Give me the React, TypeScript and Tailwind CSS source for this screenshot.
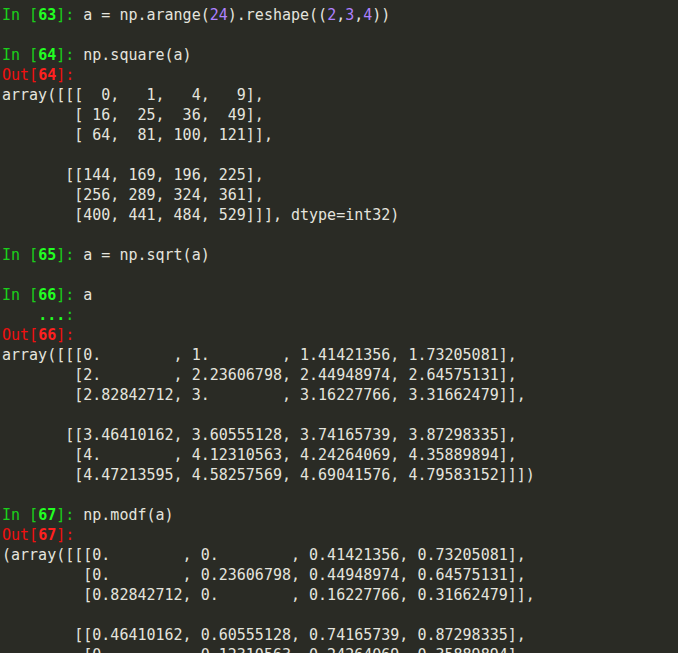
import React from 'react'

type Seg = { t: string; c?: string }

const txt = 'text-[#e4e4de]'
const num = 'text-[#ae81ff]'

function InPrompt({ n }: { n: number }) {
    return (
        <>
            <span className="text-[#1ad01a]">In [</span>
            <span className="text-[#22ff22] font-bold">{n}</span>
            <span className="text-[#1ad01a]">]: </span>
        </>
    )
}

function OutPrompt({ n }: { n: number }) {
    return (
        <>
            <span className="text-[#f01010]">Out[</span>
            <span className="text-[#ff2020] font-bold">{n}</span>
            <span className="text-[#f01010]">]:</span>
        </>
    )
}

function Line({ children }: { children?: React.ReactNode }) {
    return <div className="h-5 whitespace-pre">{children ?? ' '}</div>
}

function Plain({ text }: { text: string }) {
    return (
        <Line>
            <span className={txt}>{text}</span>
        </Line>
    )
}

function Code({ segs }: { segs: Seg[] }) {
    return (
        <>
            {segs.map((s, i) => (
                <span key={i} className={s.c ?? txt}>{s.t}</span>
            ))}
        </>
    )
}

function App() {
    return (
        <div className="w-[678px] h-[653px] overflow-hidden bg-[#2a2b25] pt-[5px] pl-[2px] text-[15px] leading-5 font-['DejaVu_Sans_Mono',monospace]">
            <Line>
                <InPrompt n={63} />
                <Code segs={[
                    { t: 'a = np.arange(' }, { t: '24', c: num }, { t: ').reshape((' },
                    { t: '2', c: num }, { t: ',' }, { t: '3', c: num }, { t: ',' }, { t: '4', c: num }, { t: '))' },
                ]} />
            </Line>
            <Line />
            <Line><InPrompt n={64} /><span className={txt}>np.square(a)</span></Line>
            <Line><OutPrompt n={64} /></Line>
            <Plain text="array([[[  0,   1,   4,   9]," />
            <Plain text="        [ 16,  25,  36,  49]," />
            <Plain text="        [ 64,  81, 100, 121]]," />
            <Line />
            <Plain text="       [[144, 169, 196, 225]," />
            <Plain text="        [256, 289, 324, 361]," />
            <Plain text="        [400, 441, 484, 529]]], dtype=int32)" />
            <Line />
            <Line><InPrompt n={65} /><span className={txt}>a = np.sqrt(a)</span></Line>
            <Line />
            <Line><InPrompt n={66} /><span className={txt}>a</span></Line>
            <Line>
                <span>    </span>
                <span className="text-[#22ff22] font-bold">...</span>
                <span className="text-[#1ad01a]">:</span>
            </Line>
            <Line><OutPrompt n={66} /></Line>
            <Plain text="array([[[0.        , 1.        , 1.41421356, 1.73205081]," />
            <Plain text="        [2.        , 2.23606798, 2.44948974, 2.64575131]," />
            <Plain text="        [2.82842712, 3.        , 3.16227766, 3.31662479]]," />
            <Line />
            <Plain text="       [[3.46410162, 3.60555128, 3.74165739, 3.87298335]," />
            <Plain text="        [4.        , 4.12310563, 4.24264069, 4.35889894]," />
            <Plain text="        [4.47213595, 4.58257569, 4.69041576, 4.79583152]]])" />
            <Line />
            <Line><InPrompt n={67} /><span className={txt}>np.modf(a)</span></Line>
            <Line><OutPrompt n={67} /></Line>
            <Plain text="(array([[[0.        , 0.        , 0.41421356, 0.73205081]," />
            <Plain text="         [0.        , 0.23606798, 0.44948974, 0.64575131]," />
            <Plain text="         [0.82842712, 0.        , 0.16227766, 0.31662479]]," />
            <Line />
            <Plain text="        [[0.46410162, 0.60555128, 0.74165739, 0.87298335]," />
            <Plain text="         [0.        , 0.12310563, 0.24264069, 0.35889894]," />
        </div>
    )
}

export default App
